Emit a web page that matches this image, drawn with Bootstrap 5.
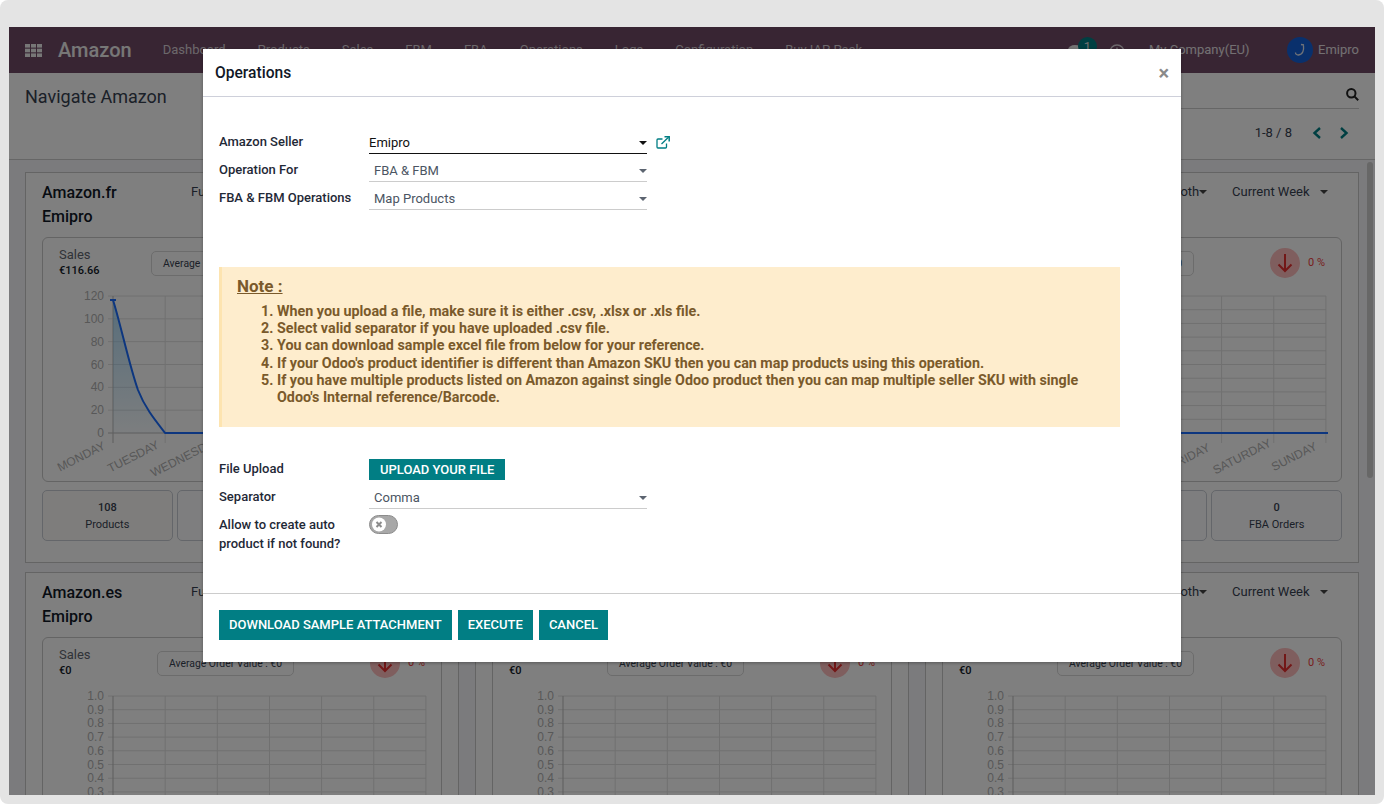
<!doctype html>
<html lang="en">
<head>
    <meta charset="utf-8" />
    <meta content="width=device-width, initial-scale=1" name="viewport" />
    <title>Operations - Amazon</title>
    <link href="https://cdn.jsdelivr.net/npm/bootstrap@5.3.6/dist/css/bootstrap.min.css" rel="stylesheet" />
    <style>
        html, body {
            height: 100%;
            background: #fff;
            overflow: hidden;
        }

        body {
            font-family: Roboto, "Liberation Sans", sans-serif;
            font-size: 13px;
            color: #374151;
        }

        .shot-frame {
            height: 804px;
            padding: 27px 9px 9px;
            background: #e4e4e4;
            border-radius: 8px;
        }

        .app-win {
            position: relative;
            height: 768px;
            overflow: hidden;
            background: #f6f7fa;
        }

        /* top bar */
        .top-bar {
            height: 46px;
            padding: 0 16px;
            background: #714b67;
            color: #fff;
        }

        .top-brand {
            margin: 0 31px 0 16px;
            font-size: 20px;
            font-weight: 500;
            color: #eee;
        }

        .top-menu {
            gap: 32px;
            color: #d8d0d6;
        }

        .top-badge {
            position: absolute;
            left: 1069px;
            top: 10px;
            width: 19px;
            height: 19px;
            border-radius: 50%;
            background: #017e84;
            color: #ddd;
            line-height: 19px;
            text-align: center;
        }

        .top-comment {
            position: absolute;
            left: 1059px;
            top: 18px;
        }

        .top-clock {
            position: absolute;
            left: 1100px;
            top: 17px;
        }

        .top-company {
            position: absolute;
            left: 1140px;
            top: 13px;
            color: #e6e1e5;
        }

        .top-user {
            position: absolute;
            left: 1278px;
            top: 10px;
            gap: 5px;
            color: #e6e1e5;
        }

        /* control panel */
        .ctl-panel {
            height: 87px;
            padding: 11px 16px 0;
            background: #fff;
            border-bottom: 1px solid #ccc;
        }

        .ctl-title {
            padding-top: 1px;
            font-size: 18px;
            line-height: 24px;
            color: #374151;
        }

        .ctl-search {
            width: 420px;
            height: 25px;
            border-bottom: 1px solid #ccc;
        }

        .ctl-pager {
            margin-top: 14px;
            line-height: 20px;
        }

        .pg-prev {
            margin-left: 20px;
        }

        .pg-next {
            margin: 0 10px 0 17px;
        }

        /* kanban */
        .kb-main {
            padding: 12px 16px 0;
        }

        .kb-row {
            margin-bottom: 9px;
        }

        .kb-card {
            height: 391px;
            padding: 8px 16px 0;
            background: #fff;
            border: 1px solid #c8c8c8;
        }

        .kb-head {
            height: 56px;
        }

        .kb-name {
            width: 149px;
            font-size: 16px;
            font-weight: 500;
            line-height: 24px;
            color: #111827;
        }

        .kb-filter {
            line-height: 21px;
        }

        .kb-by {
            position: relative;
            width: 141px;
        }

        .kb-week {
            position: relative;
        }

        .kb-by.has-caret::after,
        .kb-week.has-caret::after {
            content: "";
            position: absolute;
            top: 9px;
            border-top: 4px solid #444;
            border-left: 4px solid transparent;
            border-right: 4px solid transparent;
        }

        .kb-by.has-caret::after {
            left: 108px;
        }

        .kb-week.has-caret::after {
            left: 88px;
        }

        .kb-chart-box {
            height: 245px;
            margin-bottom: 8px;
            background: #fff;
            border: 1px solid #c8c8c8;
            border-radius: 6px;
        }

        .kb-chart-top {
            height: 32px;
            margin-top: 9px;
            padding: 0 17px 0 16px;
        }

        .kb-sales {
            line-height: 16px;
            color: #5f6670;
        }

        .kb-sales b {
            display: block;
            font-size: 11px;
            font-weight: 500;
            color: #111827;
        }

        .kb-avg {
            height: 25px;
            padding: 0 11px;
            margin-right: 76px;
            font-size: 10.4px;
            line-height: 23px;
            white-space: nowrap;
            border: 1px solid #d8d8d8;
            border-radius: 5px;
        }

        .kb-down {
            width: 30px;
            height: 30px;
            margin-right: 8px;
            border-radius: 50%;
            background: #ffbcbc;
        }

        .kb-pct {
            width: 16px;
            padding-top: 1px;
            font-size: 11px;
            white-space: nowrap;
            color: #f03c3c;
        }

        .kb-stat {
            flex: 1 1 0;
            height: 51px;
            padding-top: 8px;
            font-size: 11px;
            line-height: 17px;
            text-align: center;
            background: #fdfbf8;
            border: 1px solid #c8ccd4;
            border-radius: 5px;
        }

        .kb-stat b {
            display: block;
            font-weight: 500;
            color: #374151;
        }

        .kb-stat.is-cool {
            background: #fcfdff;
        }

        .kb-svg {
            display: block;
        }

        .kb-svg text {
            font-family: "Liberation Sans", sans-serif;
            font-size: 12px;
            fill: #b0b0b0;
        }

        .scroll-thumb {
            position: absolute;
            left: 1358px;
            top: 135px;
            width: 6px;
            height: 316px;
            border-radius: 3px;
            background: #cfcfcf;
        }

        /* modal */
        .dim-layer {
            position: absolute;
            inset: 0;
            background: rgba(0, 0, 0, .5);
        }

        .ops-modal {
            position: absolute;
            left: 194px;
            top: 22px;
            width: 978px;
            height: 613px;
            background: #fff;
            border: 0;
            border-radius: 0;
            box-shadow: 0 1px 3px rgba(0, 0, 0, .3);
        }

        .ops-head {
            height: 48px;
            padding: 0 12px;
            border-bottom: 1px solid #ced0da;
        }

        .ops-title {
            padding-top: 2px;
            font-size: 15.6px;
            font-weight: 500;
            color: #111827;
        }

        .ops-close {
            font-size: 20px;
            font-weight: 700;
            line-height: 1;
            color: #8a8a8a;
        }

        .ops-body {
            padding: 35px 61px 0 16px;
        }

        .frm-row {
            display: flex;
            align-items: flex-start;
            min-height: 28px;
        }

        .frm-label {
            width: 150px;
            line-height: 19px;
            font-weight: 500;
            color: #1f2937;
        }

        .frm-select {
            position: relative;
            width: 278px;
            height: 22px;
            padding: 1px 5px 0;
            line-height: 19px;
            color: #4b5563;
            border-bottom: 1px solid #ccc;
        }

        .frm-select::after {
            content: "";
            position: absolute;
            right: 0;
            top: 9px;
            border-top: 4px solid #5c6470;
            border-left: 4px solid transparent;
            border-right: 4px solid transparent;
        }

        .frm-select.is-active {
            padding-left: 0;
            color: #111;
            border-bottom-color: #111;
        }

        .frm-select.is-active::after {
            border-top-color: #111;
        }

        .frm-link {
            margin-left: 9px;
            margin-top: 4px;
        }

        .note-box {
            height: 160px;
            margin-top: 51px;
            margin-bottom: 32px;
            padding: 7px 15px 0;
            font-weight: 700;
            color: #7a5a2b;
            background: #feedcd;
            border-left: 3px solid #fde4b0;
        }

        .note-title {
            margin: 0;
            font-size: 17px;
            font-weight: 700;
            line-height: 24px;
            text-decoration: underline;
        }

        .note-list {
            margin: 5px 0 0;
            padding-left: 40px;
            font-size: 14.3px;
            line-height: 17.2px;
        }

        .btn-teal {
            height: 30px;
            padding: 0 10px;
            font-size: 13px;
            font-weight: 500;
            line-height: 30px;
            color: #fff;
            text-transform: uppercase;
            background: #017e84;
            border: 0;
            border-radius: 0;
        }

        .btn-teal.is-small {
            height: 21px;
            padding: 0 11px;
            line-height: 21px;
        }

        .ops-foot {
            position: absolute;
            left: 0;
            right: 0;
            bottom: 0;
            height: 69px;
            padding: 16px 16px 0;
            gap: 6px;
            border-top: 1px solid #ccc;
        }
    </style>
</head>
<body>

<div class="shot-frame">
    <div class="app-win">

        <nav class="top-bar d-flex align-items-center position-relative">
            <svg width="17" height="13" viewBox="0 0 17 13" fill="#eee">
                <rect x="0" y="0" width="5" height="3.6"/><rect x="6" y="0" width="5" height="3.6"/><rect x="12" y="0" width="5" height="3.6"/>
                <rect x="0" y="4.7" width="5" height="3.6"/><rect x="6" y="4.7" width="5" height="3.6"/><rect x="12" y="4.7" width="5" height="3.6"/>
                <rect x="0" y="9.4" width="5" height="3.6"/><rect x="6" y="9.4" width="5" height="3.6"/><rect x="12" y="9.4" width="5" height="3.6"/>
            </svg>
            <span class="top-brand">Amazon</span>
            <div class="top-menu d-flex">
                <span>Dashboard</span><span>Products</span><span>Sales</span><span>FBM</span><span>FBA</span>
                <span>Operations</span><span>Logs</span><span>Configuration</span><span>Buy IAP Pack</span>
            </div>
            <svg class="top-comment" width="14" height="12" viewBox="0 0 14 12" fill="#e8e8e8">
                <ellipse cx="7" cy="5" rx="7" ry="5"/><path d="M3 8 L2 12 L7 9 Z"/>
            </svg>
            <span class="top-badge">1</span>
            <svg class="top-clock" width="16" height="16" viewBox="0 0 16 16" fill="none" stroke="#d8d0d6" stroke-width="1.4">
                <circle cx="8" cy="8" r="7"/><path d="M8 3.5 V8 H11"/>
            </svg>
            <span class="top-company">My Company(EU)</span>
            <div class="top-user d-flex align-items-center">
                <svg width="26" height="26" viewBox="0 0 26 26">
                    <circle cx="13" cy="13" r="13" fill="#1360d8"/>
                    <path d="M14 7.5 L17 8 M16.5 8.5 C17 13 16 17.5 11.5 18 C9.5 18.2 8.5 17 8.5 15.5" fill="none" stroke="#e0e6f0" stroke-width="1.3"/>
                </svg>
                <span>Emipro</span>
            </div>
        </nav>

        <div class="ctl-panel">
            <div class="d-flex justify-content-between">
                <div class="ctl-title">Navigate Amazon</div>
                <div class="ctl-search d-flex justify-content-end align-items-start pt-1">
                    <svg width="13" height="13" viewBox="0 0 13 13" fill="none" stroke="#222" stroke-width="2">
                        <circle cx="5.3" cy="5.3" r="4.2"/><path d="M8.4 8.4 L12.2 12.2"/>
                    </svg>
                </div>
            </div>
            <div class="ctl-pager d-flex justify-content-end align-items-center">
                <span>1-8 / 8</span>
                <svg class="pg-prev" width="10" height="12" viewBox="0 0 10 12" fill="none" stroke="#017e84" stroke-width="2.4"><path d="M8 1 L2.5 6 L8 11"/></svg>
                <svg class="pg-next" width="10" height="12" viewBox="0 0 10 12" fill="none" stroke="#017e84" stroke-width="2.4"><path d="M2 1 L7.5 6 L2 11"/></svg>
            </div>
        </div>

        <div class="kb-main" id="kanban"></div>
        <div class="scroll-thumb"></div>

        <div class="dim-layer"></div>

        <div class="modal-content ops-modal">
            <div class="ops-head d-flex align-items-center justify-content-between">
                <span class="ops-title">Operations</span>
                <span class="ops-close">&times;</span>
            </div>
            <div class="ops-body">
                <div class="frm-row">
                    <div class="frm-label">Amazon Seller</div>
                    <div class="frm-select is-active">Emipro</div>
                    <svg class="frm-link" width="14" height="13" viewBox="0 0 14 13" fill="none" stroke="#017e84" stroke-width="1.3">
                        <path d="M10.5 7.5 V11 a1 1 0 0 1 -1 1 H2 a1 1 0 0 1 -1 -1 V4 a1 1 0 0 1 1 -1 H6.5"/>
                        <path d="M5.5 8 L12.5 1.2"/>
                        <path d="M8.5 .8 H13.2 V5.5" stroke-width="1.5"/>
                    </svg>
                </div>
                <div class="frm-row">
                    <div class="frm-label">Operation For</div>
                    <div class="frm-select">FBA &amp; FBM</div>
                </div>
                <div class="frm-row">
                    <div class="frm-label">FBA &amp; FBM Operations</div>
                    <div class="frm-select">Map Products</div>
                </div>

                <div class="note-box">
                    <h4 class="note-title">Note :</h4>
                    <ol class="note-list">
                        <li>When you upload a file, make sure it is either .csv, .xlsx or .xls file.</li>
                        <li>Select valid separator if you have uploaded .csv file.</li>
                        <li>You can download sample excel file from below for your reference.</li>
                        <li>If your Odoo's product identifier is different than Amazon SKU then you can map products using this operation.</li>
                        <li>If you have multiple products listed on Amazon against single Odoo product then you can map multiple seller SKU with single Odoo's Internal reference/Barcode.</li>
                    </ol>
                </div>

                <div class="frm-row">
                    <div class="frm-label">File Upload</div>
                    <button class="btn btn-teal is-small" type="button">Upload your file</button>
                </div>
                <div class="frm-row">
                    <div class="frm-label">Separator</div>
                    <div class="frm-select">Comma</div>
                </div>
                <div class="frm-row">
                    <div class="frm-label">Allow to create auto<br>product if not found?</div>
                    <svg width="29" height="19" viewBox="0 0 29 19">
                        <rect x=".5" y=".5" width="28" height="18" rx="9" fill="#a8a8a8" stroke="#8c8c8c"/>
                        <circle cx="10" cy="9.5" r="7" fill="#fff"/>
                        <path d="M7.5 7 L12.5 12 M12.5 7 L7.5 12" stroke="#8c8c8c" stroke-width="2"/>
                    </svg>
                </div>
            </div>
            <div class="ops-foot d-flex align-items-start">
                <button class="btn btn-teal" type="button">Download sample attachment</button>
                <button class="btn btn-teal" type="button">Execute</button>
                <button class="btn btn-teal" type="button">Cancel</button>
            </div>
        </div>

    </div>
</div>

<script src="https://cdn.jsdelivr.net/npm/bootstrap@5.3.6/dist/js/bootstrap.bundle.min.js"></script>
<script>
    const DAYS = ["MONDAY", "TUESDAY", "WEDNESDAY", "THURSDAY", "FRIDAY", "SATURDAY", "SUNDAY"];
    const AXIS_X = 70, STEP_X = 52.15, TOP_Y = 17, ZERO_Y = 154;
    const FULFIL = "Fulfillment By Both";

    // only what shows around the dialog gets a text, the rest stays an empty shell
    const records = [
        [
            {name: "Amazon.fr", by: FULFIL, label: "Sales", sales: "€116.66", avg: "Average Order Value : €14",
                stats: [[108, "Products"], null, null], days: [0, 1, 2], yLabels: true, peak: true},
            {},
            {by: FULFIL, week: "Current Week", avg: "Average Order Value : €0", pct: "0 %",
                stats: [null, null, [0, "FBA Orders"]], days: [4, 5, 6], flat: true}
        ],
        [
            {name: "Amazon.es", by: FULFIL, label: "Sales", sales: "€0", avg: "Average Order Value : €0", pct: "0 %", yLabels: true},
            {sales: "€0", avg: "Average Order Value : €0", pct: "0 %", yLabels: true},
            {by: FULFIL, week: "Current Week", sales: "€0", avg: "Average Order Value : €0", pct: "0 %", yLabels: true}
        ]
    ];

    function chart(rec) {
        const ticks = rec.peak ? ["120", "100", "80", "60", "40", "20", "0"]
            : ["1.0", "0.9", "0.8", "0.7", "0.6", "0.5", "0.4", "0.3", "0.2", "0.1", "0"];
        const stepY = (ZERO_Y - TOP_Y) / (ticks.length - 1);
        let out = "";

        ticks.forEach((t, i) => {
            const y = TOP_Y + i * stepY;
            const zero = i === ticks.length - 1;
            out += `<line x1="${AXIS_X - 5}" x2="383" y1="${y}" y2="${y}" stroke="${zero ? "#bbb" : "#e0e0e0"}"/>`;
            // labels under the window edge are not drawn
            if (rec.yLabels && (rec.peak || rec.days || i < 8)) {
                out += `<text x="${AXIS_X - 9}" y="${y + 4}" text-anchor="end">${t}</text>`;
            }
        });

        DAYS.forEach((d, i) => {
            const x = AXIS_X + i * STEP_X;
            out += `<line x1="${x}" x2="${x}" y1="${TOP_Y}" y2="${ZERO_Y + 10}" stroke="${i === 0 ? "#bbb" : "#e0e0e0"}"/>`;
            if (rec.days && rec.days.includes(i)) {
                out += `<text transform="translate(${x - 30} ${ZERO_Y + 27}) rotate(-27)" text-anchor="middle">${d}</text>`;
            }
        });

        if (rec.peak) {
            const curve = `M${AXIS_X} 21 C77 43 87 89 95 111 C102 129 112 141 ${AXIS_X + STEP_X} ${ZERO_Y}`;
            out += `<defs><linearGradient id="salesFill" x1="0" y1="0" x2="0" y2="1"><stop offset="0" stop-color="#7cc4f0" stop-opacity=".6"/><stop offset="1" stop-color="#7cc4f0" stop-opacity=".05"/></linearGradient></defs>`;
            out += `<path d="${curve} H${AXIS_X} Z" fill="url(#salesFill)"/>`;
            out += `<path d="${curve} L385 ${ZERO_Y}" fill="none" stroke="#1a6dff" stroke-width="2"/>`;
            out += `<path d="M${AXIS_X - 3} 21 H${AXIS_X + 3}" stroke="#1a6dff" stroke-width="2"/>`;
        } else if (rec.flat) {
            out += `<path d="M${AXIS_X} ${ZERO_Y} L385 ${ZERO_Y}" fill="none" stroke="#1a6dff" stroke-width="2"/>`;
        }
        return `<svg class="kb-svg" width="398" height="202" viewBox="0 0 398 202">${out}</svg>`;
    }

    function stat(s, i) {
        const cls = i === 0 ? "kb-stat" : "kb-stat is-cool";
        return s ? `<div class="${cls}"><b>${s[0]}</b>${s[1]}</div>` : `<div class="${cls}"></div>`;
    }

    function cardHtml(rec) {
        const stats = rec.stats || [null, null, null];
        return `
            <div class="kb-card">
                <div class="kb-head d-flex">
                    <div class="kb-name">${rec.name || ""}<br>${rec.name ? "Emipro" : ""}</div>
                    <div class="kb-filter d-flex">
                        <span class="kb-by ${rec.by ? "has-caret" : ""}">${rec.by || ""}</span>
                        <span class="kb-week ${rec.week ? "has-caret" : ""}">${rec.week || ""}</span>
                    </div>
                </div>
                <div class="kb-chart-box">
                    <div class="kb-chart-top d-flex align-items-center">
                        <div class="kb-sales me-auto">${rec.label || "&nbsp;"}<b>${rec.sales || "&nbsp;"}</b></div>
                        <div class="kb-avg">${rec.avg || ""}</div>
                        <div class="kb-down d-flex align-items-center justify-content-center">
                            <svg width="16" height="20" viewBox="0 0 16 20" fill="none" stroke="#e62e2e" stroke-width="2">
                                <path d="M8 1 V18 M1.5 11.5 L8 18 L14.5 11.5"/>
                            </svg>
                        </div>
                        <div class="kb-pct">${rec.pct || ""}</div>
                    </div>
                    ${chart(rec)}
                </div>
                <div class="d-flex gap-1">${stats.map(stat).join("")}</div>
            </div>`;
    }

    document.getElementById("kanban").innerHTML = records.map(row =>
        `<div class="row gx-3 kb-row">${row.map(r => `<div class="col-4">${cardHtml(r)}</div>`).join("")}</div>`
    ).join("");
</script>

</body>
</html>
